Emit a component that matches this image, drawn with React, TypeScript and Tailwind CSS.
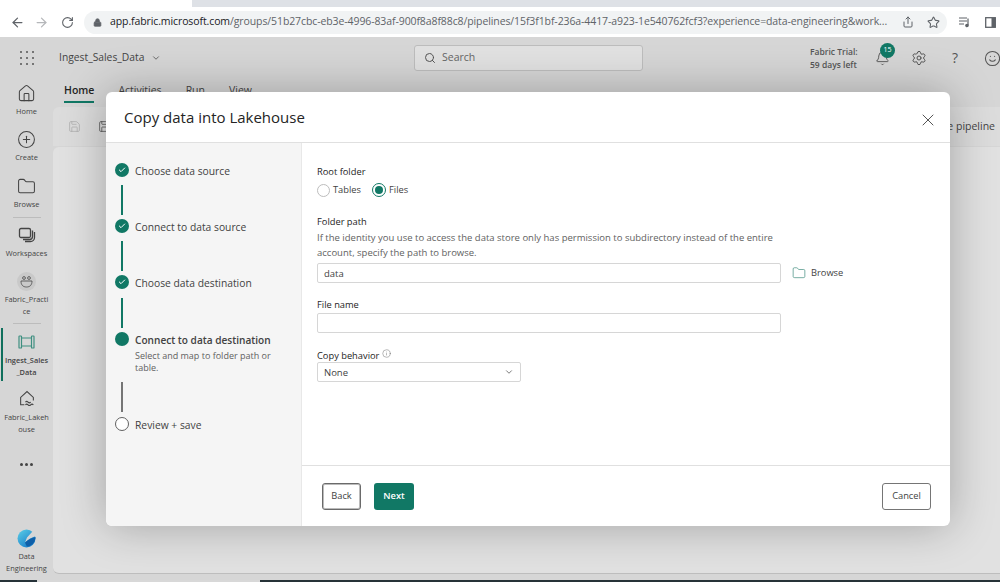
import React from "react";
import { ArrowLeft, ArrowRight, RotateCw, Lock, Star, ChevronDown, Search, Bell, Settings, Smile, Home, CirclePlus, Folder, Check, X, Info, Share, Save } from "lucide-react";

const font = { fontFamily: '"Open Sans", "Noto Sans", sans-serif' };

function Grip() {
  return (
    <svg width="14" height="14" viewBox="0 0 14 14" fill="#555">
      {[1, 7, 13].flatMap((y) => [1, 7, 13].map((x) => <circle key={`${x}-${y}`} cx={x} cy={y} r="1" />))}
    </svg>
  );
}

function NavItem({ icon, label, h, active }: { icon: React.ReactNode; label: React.ReactNode; h: string; active?: boolean }) {
  return (
    <div className={`relative flex flex-col items-center w-full ${h}`}>
      {active && <div className="absolute left-[1px] top-0 bottom-0 w-[2px] bg-[#0f6f5c]" />}
      <div className={`h-[20px] flex items-center justify-center ${active ? "mt-[4px]" : ""}`}>{icon}</div>
      <div className={`text-[7.4px] leading-[12px] text-center text-[#444] mt-[2px] ${active ? "font-semibold" : ""}`}>{label}</div>
    </div>
  );
}

function StepCircle({ state }: { state: "done" | "current" | "todo" }) {
  if (state === "done")
    return (
      <div className="w-[14px] h-[14px] rounded-full bg-[#117865] flex items-center justify-center shrink-0">
        <Check size={8} color="#fff" strokeWidth={3} />
      </div>
    );
  if (state === "current") return <div className="w-[14px] h-[14px] rounded-full bg-[#117865] shrink-0" />;
  return <div className="w-[14px] h-[14px] rounded-full border border-[#616161] bg-white shrink-0" />;
}

function Step({ state, label, sub }: { state: "done" | "current" | "todo"; label: string; sub?: React.ReactNode }) {
  return (
    <div>
      <div className="flex items-center gap-[6px] h-[16px]">
        <StepCircle state={state} />
        <span className={`mt-[3px] text-[#424242] ${state === "current" ? "text-[10.1px] font-semibold text-[#242424]" : "text-[10.3px]"}`}>{label}</span>
      </div>
      {sub && <div className="ml-[20px] mt-[3px] text-[9px] leading-[12px] text-[#616161]">{sub}</div>}
    </div>
  );
}

function Connector({ color, m }: { color: string; m: string }) {
  return <div className={`ml-[6px] w-[2px] h-[30px] ${color} ${m}`} />;
}

export default function App() {
  return (
    <div style={font} className="relative w-[1000px] h-[582px] overflow-hidden flex flex-col bg-[#d6d6d6] text-[#242424]">
      {/* tab strip */}
      <div className="h-[7px] flex shrink-0">
        <div className="w-[192px] bg-white" />
        <div className="flex-1 bg-[#dee1e6]" />
      </div>
      {/* browser toolbar */}
      <div className="h-[30px] bg-white flex items-center shrink-0 pl-[10px]">
        <ArrowLeft size={15} color="#5f6368" strokeWidth={2} className="shrink-0" />
        <ArrowRight size={15} color="#b5b7ba" strokeWidth={2} className="ml-[9px] shrink-0" />
        <RotateCw size={13} color="#5f6368" strokeWidth={2} className="ml-[12px] shrink-0" />
        <div className="ml-[10px] w-[863px] shrink-0 h-[23px] rounded-full bg-[#f1f3f4] flex items-center pl-[9px]">
          <Lock size={9} color="#5f6368" fill="#5f6368" className="shrink-0" />
          <div className="ml-[8px] text-[10.5px] tracking-[-0.1px] text-[#5f6368] w-[781px] shrink-0 whitespace-nowrap">
            <span className="text-[#202124]">app.fabric.microsoft.com</span>/groups/51b27cbc-eb3e-4996-83af-900f8a8f88c8/pipelines/15f3f1bf-236a-4417-a923-1e540762fcf3?experience=data-engineering&amp;work...
          </div>
          <Share size={12} color="#5f6368" className="ml-[11px] shrink-0" />
          <Star size={13} color="#5f6368" className="ml-[13px] shrink-0" />
        </div>
        <svg width="12" height="12" viewBox="0 0 12 12" className="ml-[11px] shrink-0" fill="none" stroke="#5f6368" strokeWidth="1.2">
          <path d="M1 2h8M1 5h8M1 8h5" />
          <circle cx="9" cy="9.5" r="1.2" fill="#5f6368" />
          <path d="M10 9V2.5" />
        </svg>
        <svg width="11" height="11" viewBox="0 0 11 11" className="ml-[15px] shrink-0" fill="none">
          <rect x="0.7" y="0.7" width="9.6" height="9.6" stroke="#5f6368" strokeWidth="1.3" />
          <rect x="6.5" y="1" width="4" height="9" fill="#5f6368" />
        </svg>
      </div>
      {/* app header */}
      <div className="h-[40px] flex items-center shrink-0 relative pt-[2px]">
        <div className="w-[53px] shrink-0 flex justify-center"><Grip /></div>
        <div className="ml-[6px] shrink-0 text-[10.3px] text-[#444] w-[90px]">Ingest_Sales_Data</div>
        <ChevronDown size={10} color="#555" className="ml-[2px] shrink-0" />
        <div className="ml-[253px] shrink-0 w-[229px] h-[26px] rounded-[3px] border border-[#bdbdbd] bg-[#e1e1e1] flex items-center pl-[9px]">
          <Search size={12} color="#555" />
          <span className="ml-[6px] text-[10.5px] text-[#666]">Search</span>
        </div>
        <div className="ml-[167px] shrink-0 text-[8.5px] leading-[13px] font-semibold text-[#555] w-[60px]">
          Fabric Trial:<br />59 days left
        </div>
        <div className="relative ml-[5px] w-[16px] shrink-0">
          <Bell size={15} color="#555" strokeWidth={1.5} />
          <div className="absolute -top-[8px] left-[5px] w-[15px] h-[15px] rounded-full bg-[#117865] text-white text-[7px] flex items-center justify-center">15</div>
        </div>
        <Settings size={16} color="#555" strokeWidth={1.5} className="ml-[20px] shrink-0" />
        <span className="ml-[25px] text-[14px] text-[#555] leading-none shrink-0">?</span>
        <Smile size={17} color="#555" strokeWidth={1.5} className="ml-[26px] shrink-0" />
      </div>
      {/* body */}
      <div className="flex-1 flex min-h-0">
        <div className="w-[53px] shrink-0 flex flex-col items-center pt-[6px] pb-[8px]">
          <NavItem h="h-[46px]" icon={<Home size={19} color="#444" strokeWidth={1.3} />} label="Home" />
          <NavItem h="h-[47px]" icon={<CirclePlus size={19} color="#444" strokeWidth={1.3} />} label="Create" />
          <NavItem h="h-[41px]" icon={<Folder size={19} color="#444" strokeWidth={1.3} />} label="Browse" />
          <div className="w-[28px] h-px bg-[#bcbcbc] mb-[7px] shrink-0" />
          <NavItem
            h="h-[46px]"
            icon={
              <svg width="18" height="18" viewBox="0 0 18 18" fill="none" stroke="#444" strokeWidth="1.3">
                <rect x="1.5" y="2.5" width="11" height="9" rx="1.5" fill="#d6d6d6" />
                <path d="M14.5 4.5v6a3 3 0 0 1-3 3H5M16.5 6v5.5a4 4 0 0 1-4 4H7" />
              </svg>
            }
            label="Workspaces"
          />
          <NavItem
            h="h-[52px]"
            icon={
              <div className="w-[19px] h-[19px] rounded-full bg-[#c9c9c9] flex items-center justify-center">
                <svg width="13" height="13" viewBox="0 0 13 13" fill="none" stroke="#555" strokeWidth="0.9">
                  <circle cx="4" cy="3" r="1.4" /><circle cx="9" cy="3" r="1.4" /><path d="M1 6h11c0 4-2 6-5.500 6S1 10 1 6z" />
                </svg>
              </div>
            }
            label={<>Fabric_Practi<br />ce</>}
          />
          <div className="w-[28px] h-px bg-[#bcbcbc] mb-[4px] shrink-0" />
          <NavItem
            active
            h="h-[53px] mb-[8px]"
            icon={
              <svg width="17" height="14" viewBox="0 0 17 14" fill="none" stroke="#3f8f80" strokeWidth="1.2">
                <rect x="1" y="1" width="2.500" height="12" rx="0.6" /><rect x="13.500" y="1" width="2.500" height="12" rx="0.6" /><path d="M3.500 3h10M3.500 11h10" />
              </svg>
            }
            label={<>Ingest_Sales<br />_Data</>}
          />
          <NavItem
            h="h-[62px]"
            icon={
              <svg width="18" height="18" viewBox="0 0 17 17" fill="none" stroke="#444" strokeWidth="1">
                <path d="M6 14H2.500V7L8.500 1.500 14.500 7v3" /><path d="M7 11.500c1-1 1.500-1 2.500 0s1.500 1 2.500 0M7 14c1-1 1.500-1 2.500 0s1.500 1 2.500 0 1.500-1 2.500 0" />
              </svg>
            }
            label={<>Fabric_Lakeh<br />ouse</>}
          />
          <div className="h-[26px] flex items-center gap-[2px]">
            <span className="w-[3px] h-[3px] rounded-full bg-[#444]" />
            <span className="w-[3px] h-[3px] rounded-full bg-[#444]" />
            <span className="w-[3px] h-[3px] rounded-full bg-[#444]" />
          </div>
          <div className="mt-auto w-full">
            <NavItem
              h="h-[45px]"
              icon={
                <svg width="19" height="19" viewBox="0 0 19 19">
                  <defs>
                    <linearGradient id="de" x1="0" y1="0" x2="0.8" y2="1">
                      <stop offset="0" stopColor="#5ccfe6" />
                      <stop offset="1" stopColor="#1478c8" />
                    </linearGradient>
                  </defs>
                  <circle cx="9.500" cy="9.500" r="9" fill="url(#de)" />
                  <path d="M19 0 L19 7 L13 9.500 L8 13.500 L10 8.500 L15 3 z" fill="#d6d6d6" />
                  <path d="M8 13.500 C11 10.500 14.500 9 18.500 8 C18.500 13 15 17 10 17.500 C9 16 8.500 15 8 13.500 z" fill="#0f5fa8" />
                </svg>
              }
              label={<>Data<br />Engineering</>}
            />
          </div>
        </div>
        {/* content behind scrim */}
        <div className="flex-1 min-w-0 flex flex-col">
          <div className="h-[25px] flex items-center gap-[24px] pl-[11px] text-[10.5px] text-[#444] shrink-0 mt-[1px]">
            <div className="relative font-semibold text-[#242424]">Home<div className="absolute left-0 right-0 -bottom-[5px] h-[2px] bg-[#117865]" /></div>
            <span>Activities</span>
            <span>Run</span>
            <span>View</span>
          </div>
          <div className="h-[39px] mt-[4px] bg-[#dcdcdc] rounded-tl-[6px] flex items-center pl-[15px] shrink-0">
            <Save size={13} color="#aaa" strokeWidth={1.3} />
            <Save size={13} color="#444" strokeWidth={1.3} className="ml-[17px]" />
            <span className="ml-auto text-[10.5px] text-[#444] pr-[5px]">Save pipeline</span>
          </div>
          <div className="flex-1 mt-[1px] mb-[8px] rounded-l-[6px] bg-[#e1e1e1] border-b border-[#bdbdbd]" />
        </div>
      </div>
      {/* taskbar sliver */}
      <div className="absolute left-0 right-0 bottom-0 h-[2px] flex">
        <div className="w-[37px] bg-[#263238]" />
        <div className="w-[223px] bg-[#d8d8d8]" />
        <div className="flex-1 bg-[#263238]" />
      </div>
      {/* modal */}
      <div className="absolute left-[106px] top-[92px] w-[844px] h-[434px] bg-white rounded-[6px] overflow-hidden shadow-[0_0_45px_rgba(0,0,0,0.28)] flex flex-col">
        <div className="h-[51px] shrink-0 border-b border-[#e0e0e0] flex items-center justify-between pl-[18px] pr-[12px]">
          <span className="text-[15px] font-medium text-[#242424] mt-[1px]">Copy data into Lakehouse</span>
          <X size={20} color="#333" strokeWidth={1} className="mt-[5px]" />
        </div>
        <div className="flex-1 flex min-h-0">
          <div className="w-[196px] shrink-0 bg-[#f5f5f5] border-r border-[#e8e8e8] pl-[9px] pt-[19px]">
            <Step state="done" label="Choose data source" />
            <Connector color="bg-[#117865]" m="mt-[7px] mb-[3px]" />
            <Step state="done" label="Connect to data source" />
            <Connector color="bg-[#117865]" m="mt-[7px] mb-[3px]" />
            <Step state="done" label="Choose data destination" />
            <Connector color="bg-[#117865]" m="mt-[8px] mb-[3px]" />
            <Step state="current" label="Connect to data destination" sub={<>Select and map to folder path or<br />table.</>} />
            <Connector color="bg-[#757575]" m="mt-[8px] mb-[4px]" />
            <Step state="todo" label="Review + save" />
          </div>
          <div className="flex-1 flex flex-col min-w-0">
            <div className="flex-1 pl-[15px] pt-[22px] text-[#424242]">
              <div className="text-[9.3px] leading-[13px] font-medium text-[#242424]">Root folder</div>
              <div className="flex items-center mt-[5px] h-[14px] text-[9.3px]">
                <span className="w-[13px] h-[13px] rounded-full border border-[#bdbdbd] bg-white" />
                <span className="ml-[3px]">Tables</span>
                <span className="ml-[11px] w-[14px] h-[14px] rounded-full border border-[#117865] flex items-center justify-center">
                  <span className="w-[8px] h-[8px] rounded-full bg-[#117865]" />
                </span>
                <span className="ml-[3px]">Files</span>
              </div>
              <div className="mt-[18px] text-[9.3px] leading-[13px] font-medium text-[#242424]">Folder path</div>
              <div className="mt-[2px] text-[9.5px] leading-[15px] text-[#616161] w-[470px]">
                If the identity you use to access the data store only has permission to subdirectory instead of the entire<br />account, specify the path to browse.
              </div>
              <div className="flex items-center mt-[3px]">
                <div className="w-[464px] h-[20px] border border-[#d6d6d6] rounded-[2px] flex items-center pl-[6px] pt-[2px] text-[9.5px] text-[#424242]">data</div>
                <Folder size={14} color="#2f8272" strokeWidth={1.1} className="ml-[11px]" />
                <span className="ml-[5px] text-[9.3px] text-[#424242]">Browse</span>
              </div>
              <div className="mt-[15px] text-[9.3px] leading-[13px] font-medium text-[#242424]">File name</div>
              <div className="mt-[2px] w-[464px] h-[20px] border border-[#d6d6d6] rounded-[2px]" />
              <div className="mt-[16px] flex items-center h-[13px]">
                <span className="text-[9.3px] font-medium text-[#242424]">Copy behavior</span>
                <Info size={9} color="#616161" strokeWidth={1.2} className="ml-[3px] -mt-[4px]" />
              </div>
              <div className="w-[204px] h-[20px] border border-[#d6d6d6] rounded-[2px] flex items-center justify-between pl-[6px] pr-[6px] text-[9.5px]">
                <span className="pt-[2px]">None</span>
                <ChevronDown size={10} color="#616161" />
              </div>
            </div>
            <div className="h-[61px] shrink-0 border-t border-[#e0e0e0] flex items-center pl-[20px] pr-[19px] text-[9.3px]">
              <button className="w-[39px] h-[27px] rounded-[3px] border-[1.5px] border-[#6a6a6a] shadow-[inset_0_0_0_1px_#bbb] bg-white text-[#424242] font-medium">Back</button>
              <button className="ml-[13px] w-[40px] h-[27px] rounded-[3px] bg-[#117865] text-white font-semibold">Next</button>
              <button className="ml-auto w-[49px] h-[27px] rounded-[3px] border border-[#757575] bg-white text-[#424242] font-medium">Cancel</button>
            </div>
          </div>
        </div>
      </div>
    </div>
  );
}
